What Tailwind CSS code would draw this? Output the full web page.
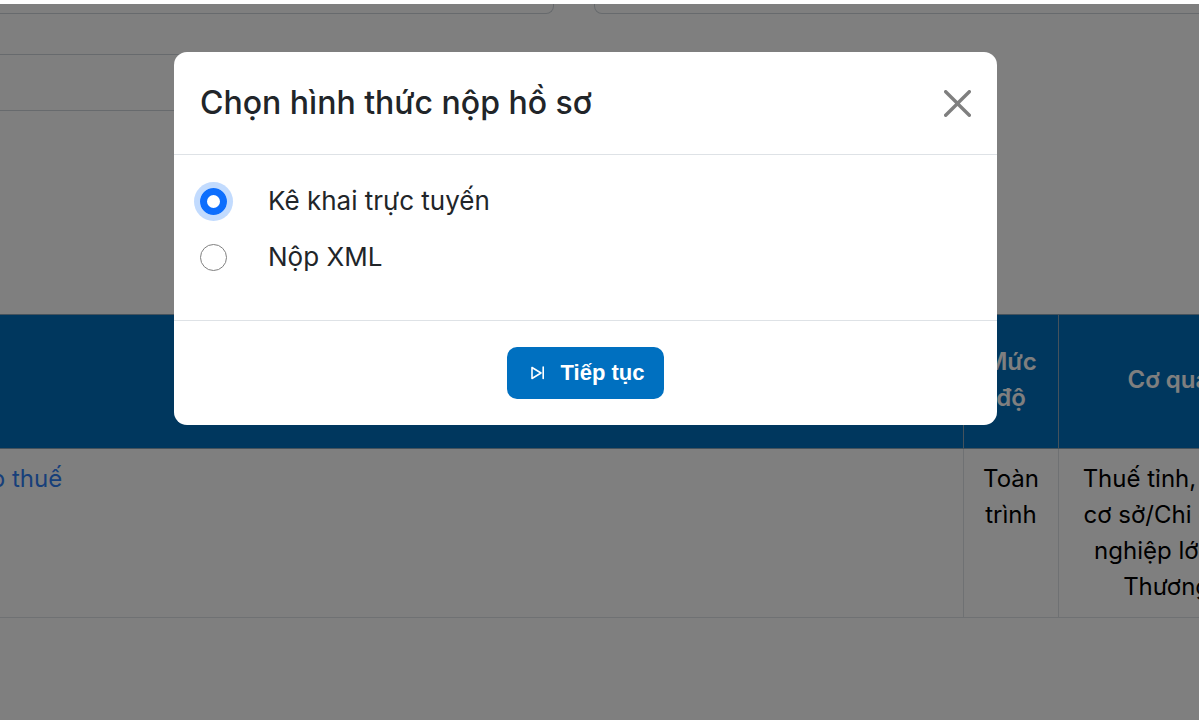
<!DOCTYPE html>
<html lang="vi">
<head>
    <meta charset="UTF-8">
    <title>Chọn hình thức nộp hồ sơ</title>
    <script src="https://cdn.jsdelivr.net/npm/@tailwindcss/browser@4"></script>
</head>
<body class="bg-white pt-1 pr-px font-['Inter','Noto_Sans',sans-serif] text-black overflow-hidden">
    <div class="relative min-h-screen overflow-hidden">
        <!-- Search form -->
        <form class="flex flex-col">
            <div class="flex gap-10">
                <input type="text" aria-label="Từ khóa" class="h-[10px] w-[554px] shrink-0 border border-t-0 border-l-0 border-[#ced4da] rounded-br-lg">
                <input type="text" aria-label="Lĩnh vực" class="h-[10px] w-[640px] shrink-0 border border-t-0 border-[#ced4da] rounded-b-lg">
            </div>
            <input type="text" aria-label="Cơ quan" class="mt-10 h-[57px] w-[554px] border border-l-0 border-[#ced4da] rounded-r-lg">
        </form>

        <!-- Results -->
        <table class="mt-[203px] -ml-16 w-[1472px] table-fixed border-collapse text-2xl leading-9">
            <thead>
                <tr class="h-[134px] bg-[#006ebc] text-white">
                    <th class="w-[1027px] border border-[#8aa4b8]"></th>
                    <th class="w-[95px] border border-[#8aa4b8] px-2 pb-1 font-semibold">Mức độ</th>
                    <th class="border border-[#8aa4b8] px-4 pb-1 font-semibold">Cơ quan thực hiện</th>
                </tr>
            </thead>
            <tbody>
                <tr class="h-[169px] align-top text-center">
                    <td class="border border-[#dee2e6] px-[25px] py-3 text-left"><a href="#" class="text-[#2f7ff5]">nộp thuế</a></td>
                    <td class="border border-[#dee2e6] px-2 py-3">Toàn trình</td>
                    <td class="border border-[#dee2e6] px-4 py-3">Thuế tỉnh, thành phố/Thuế<br>cơ sở/Chi cục Thuế doanh<br>nghiệp lớn/Chi cục Thuế<br>Thương mại điện tử</td>
                </tr>
            </tbody>
        </table>

        <!-- Modal -->
        <div class="absolute inset-0 bg-black/50 flex items-start justify-center pt-12 pr-7">
            <div role="dialog" aria-labelledby="modalTitle" class="w-[823px] max-w-full rounded-[13px] bg-white text-[#212529]">
                <div class="flex items-center justify-between h-[103px] px-[26px] border-b border-[#dee2e6]">
                    <h5 id="modalTitle" class="text-[32px] leading-[50px] font-medium">Chọn hình thức nộp hồ sơ</h5>
                    <button type="button" aria-label="Đóng">
                        <svg class="size-[27px]" viewBox="0 0 16 16" fill="#000" fill-opacity=".5"><path d="M.293.293a1 1 0 0 1 1.414 0L8 6.586 14.293.293a1 1 0 1 1 1.414 1.414L9.414 8l6.293 6.293a1 1 0 0 1-1.414 1.414L8 9.414l-6.293 6.293a1 1 0 0 1-1.414-1.414L6.586 8 .293 1.707a1 1 0 0 1 0-1.414z"/></svg>
                    </button>
                </div>
                <div class="flex flex-col gap-4 px-[26px] pt-[26px] pb-[43px] text-[26px] leading-10">
                    <div class="flex items-center gap-[41px]">
                        <input type="radio" name="type" id="online" checked class="size-[27px] appearance-none rounded-full border border-[#808080] checked:border-[7px] checked:border-[#0d6efd] checked:ring-[6px] checked:ring-[#0d6efd]/25">
                        <label for="online">Kê khai trực tuyến</label>
                    </div>
                    <div class="flex items-center gap-[41px]">
                        <input type="radio" name="type" id="xml" class="size-[27px] appearance-none rounded-full border border-[#808080] checked:border-[7px] checked:border-[#0d6efd] checked:ring-[6px] checked:ring-[#0d6efd]/25">
                        <label for="xml">Nộp XML</label>
                    </div>
                </div>
                <div class="flex justify-center border-t border-[#dee2e6] py-[26px]">
                    <button type="button" class="flex items-center gap-3 h-[52px] px-5 rounded-[10px] bg-[#0070c0] text-white font-['Liberation_Sans',Arial,sans-serif] font-bold text-[22px] leading-8">
                        <svg class="size-[22px]" viewBox="0 0 22 22" fill="none" stroke="currentColor" stroke-width="1.6" stroke-linejoin="round" stroke-linecap="round"><path d="M5 5.500v11L14 11z M16.200 5v11.500"/></svg>
                        Tiếp tục
                    </button>
                </div>
            </div>
        </div>
    </div>
</body>
</html>
